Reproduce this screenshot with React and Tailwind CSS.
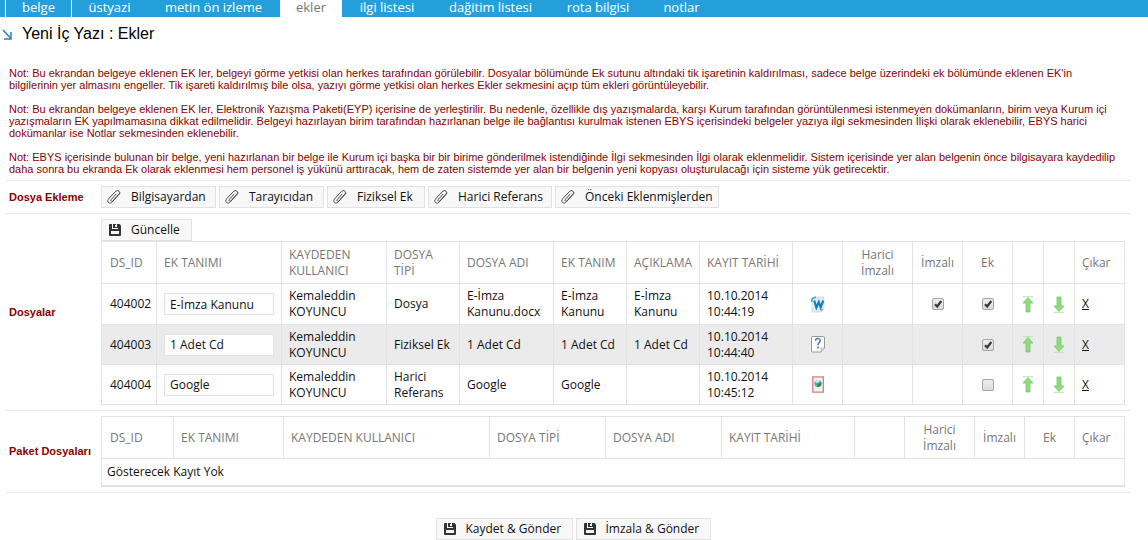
import React, { useState } from 'react';

const tabs = [
    { label: 'belge', width: 'w-[66px] border-l border-white' },
    { label: 'üstyazi', width: 'w-[76px] border-l border-white' },
    { label: 'metin ön izleme', width: 'w-[133px]' },
    { label: 'ekler', width: 'w-[62px]' },
    { label: 'ilgi listesi', width: 'w-[90px]' },
    { label: 'dağitim listesi', width: 'w-[117px]' },
    { label: 'rota bilgisi', width: 'w-[98px]' },
    { label: 'notlar', width: 'w-[69px]' },
];

const sources = [
    { label: 'Bilgisayardan', width: 'w-[115px]' },
    { label: 'Tarayıcıdan', width: 'w-[105px]' },
    { label: 'Fiziksel Ek', width: 'w-[98px]' },
    { label: 'Harici Referans', width: 'w-[124px]' },
    { label: 'Önceki Eklenmişlerden', width: 'w-[164px]' },
];

const fileColumns = [
    { label: 'DS_ID', width: 'w-[55px]' },
    { label: 'EK TANIMI', width: 'w-[125px]' },
    { label: 'KAYDEDEN KULLANICI', width: 'w-[105px]' },
    { label: 'DOSYA TİPİ', width: 'w-[73px]' },
    { label: 'DOSYA ADI', width: 'w-[94px]' },
    { label: 'EK TANIM', width: 'w-[73px]' },
    { label: 'AÇIKLAMA', width: 'w-[73px]' },
    { label: 'KAYIT TARİHİ', width: 'w-[93px]' },
    { label: '', width: 'w-[50px]' },
    { label: 'Harici İmzalı', width: 'w-[70px]', center: true },
    { label: 'İmzalı', width: 'w-[50px]', center: true },
    { label: 'Ek', width: 'w-[50px]', center: true },
    { label: '', width: 'w-[31px]' },
    { label: '', width: 'w-[31px]' },
    { label: 'Çıkar', width: 'w-[50px]' },
];

const packageColumns = [
    { label: 'DS_ID', width: 'w-[72px]' },
    { label: 'EK TANIMI', width: 'w-[110px]' },
    { label: 'KAYDEDEN KULLANICI', width: 'w-[206px]' },
    { label: 'DOSYA TİPİ', width: 'w-[116px]' },
    { label: 'DOSYA ADI', width: 'w-[116px]' },
    { label: 'KAYIT TARİHİ', width: 'w-[133px]' },
    { label: '', width: 'w-[50px]' },
    { label: 'Harici İmzalı', width: 'w-[70px]', center: true },
    { label: 'İmzalı', width: 'w-[50px]', center: true },
    { label: 'Ek', width: 'w-[50px]', center: true },
    { label: 'Çıkar', width: 'w-[50px]' },
];

const initialFiles = [
    { id: 404002, title: 'E-İmza Kanunu', type: 'Dosya', name: 'E-İmza Kanunu.docx', attachment: 'E-İmza Kanunu', note: 'E-İmza Kanunu', time: '10:44:19', icon: 'word', signed: true, attached: true },
    { id: 404003, title: '1 Adet Cd', type: 'Fiziksel Ek', name: '1 Adet Cd', attachment: '1 Adet Cd', note: '1 Adet Cd', time: '10:44:40', icon: 'unknown', attached: true },
    { id: 404004, title: 'Google', type: 'Harici Referans', name: 'Google', attachment: 'Google', note: '', time: '10:45:12', icon: 'web', attached: false },
];

const ClipIcon = () => (
    <svg width="14" height="14" viewBox="0 0 14 14" fill="none" stroke="#4a4a4a" strokeWidth="1" strokeLinecap="round">
        <path d="M9 4.200 4.400 9.400c-.6.8-.5 1.300 0 1.700.5.4 1.200.2 1.700-.4l5.700-6.400c.9-1.100.9-2.500 0-3.200-1-.8-2.500-.5-3.400.5L1.800 8.600c-1.300 1.500-1.300 3.100-.3 4 1.100.9 2.700.6 3.900-.8L13.200 3" />
    </svg>
);

const SaveIcon = () => (
    <svg width="12" height="12" viewBox="0 0 12 12" className="ml-0.5">
        <path fill="#333" d="M1 0h9.500L12 1.500V11a1 1 0 0 1-1 1H1a1 1 0 0 1-1-1V1a1 1 0 0 1 1-1z" />
        <path fill="#f8f8f8" d="M3 0h6v5H3zM2 7h8v3H2z" />
        <path fill="#333" d="M4 0h3v1H6v2H4zM8 0h1v4H4V3h4z" />
    </svg>
);

const FileIcon = ({ kind }) => {
    if (kind === 'word') {
        return (
            <svg width="14" height="17" viewBox="0 0 14 17" className="mx-auto">
                <path d="M3 1h10v12l-3 3H1V4z" fill="#e6e9f0" stroke="#cdd1d9" strokeWidth=".7" />
                <path d="M13 13l-3 3v-3z" fill="#aab0bc" />
                <path d="M.5 6C.5 3 2.500 1.500 5 1.300" fill="none" stroke="#3aa6d8" strokeWidth="1.600" />
                <path d="M3.200 4.500 5.400 11.500 7.800 6 9.600 11.500 12.300 4.500" fill="none" stroke="#147fb8" strokeWidth="2.200" />
            </svg>
        );
    }
    if (kind === 'unknown') {
        return (
            <svg width="14" height="17" viewBox="0 0 14 17" className="mx-auto">
                <path d="M1.500.5h11a1 1 0 0 1 1 1V12l-3.500 4H1.500a1 1 0 0 1-1-1V1.500a1 1 0 0 1 1-1z" fill="#fff" stroke="#999" />
                <path d="M10 16v-4h3.500" fill="#ddd" stroke="#aaa" strokeWidth=".7" />
                <path d="M4.500 4.800c.2-3 5-2.800 4.800 0C9.200 6.500 7 6.800 7 9.200" fill="none" stroke="#3b78c4" strokeWidth="1.500" />
                <circle cx="7" cy="11.500" r="1" fill="#3b78c4" />
            </svg>
        );
    }
    return (
        <svg width="14" height="17" viewBox="0 0 14 17" className="mx-auto">
            <path d="M1.800.8h10.500v15.400H1.800z" fill="#f5f1ee" stroke="#c98478" strokeWidth="1.300" />
            <circle cx="7" cy="7.500" r="3.600" fill="#5fa7b5" />
            <path d="M4 6c1-2 4-2.500 5-1.500L6.500 7z" fill="#d5ecf2" />
            <path d="M6.500 8l4-1.500c0 2.500-1.500 4.500-4 4.500z" fill="#27864a" />
        </svg>
    );
};

const MoveIcon = ({ down }) => (
    <svg width="12" height="17" viewBox="0 0 12 17" className={down ? 'rotate-180' : ''}>
        <path d="M1 .7h10" stroke="#b9e3b9" strokeWidth="1" />
        <path d="M6 1.500 11 7H8v9H4V7H1z" fill="#92dc78" stroke="#6fc67a" strokeWidth=".8" />
    </svg>
);

const ToolButton = ({ icon, children, className = '' }) => (
    <button type="button" className={`flex h-[22px] items-center border border-[#e2e2e2] bg-[#f8f8f8] pl-[5px] text-xs whitespace-nowrap text-[#111] ${className}`}>
        <span className="flex w-6 shrink-0">{icon}</span>
        {children}
    </button>
);

const CheckBox = ({ label, checked, onChange }) => (
    <span className="mx-auto grid size-3">
        <input
            type="checkbox"
            aria-label={label}
            checked={checked}
            onChange={onChange}
            className="col-start-1 row-start-1 size-3 appearance-none rounded-xs border border-[#a5a5a5] bg-linear-to-b from-[#ededed] to-[#dcdcdc]"
        />
        {checked && (
            <svg viewBox="0 0 12 12" className="pointer-events-none col-start-1 row-start-1 size-3">
                <path d="M3 6.200 5.200 8.500 9.300 3" fill="none" stroke="#3a3a3a" strokeWidth="2.200" />
            </svg>
        )}
    </span>
);

const TableHead = ({ columns }) => (
    <>
        <colgroup>
            {columns.map((col, i) => <col key={i} className={col.width} />)}
        </colgroup>
        <thead>
            <tr className="h-[42px]">
                {columns.map((col, i) => (
                    <th key={i} className={`border border-[#e2e2e2] px-[7px] font-normal text-[#777] first:pl-2 ${col.center ? 'text-center' : 'text-left'}`}>
                        {col.label}
                    </th>
                ))}
            </tr>
        </thead>
    </>
);

const FormRow = ({ label, children }) => (
    <div className="flex items-center border-b border-[#ececec] py-[5px]">
        <div className="w-24 shrink-0 pl-1 font-[Liberation_Sans,Arial,sans-serif] text-[11px] leading-3 font-bold whitespace-nowrap text-[#8b0000]">{label}</div>
        <div className="min-w-0 flex-1 pr-[5px]">{children}</div>
    </div>
);

const App = () => {
    const [files, setFiles] = useState(initialFiles);

    const update = (id, patch) => {
        setFiles(files.map(f => (f.id === id ? { ...f, ...patch } : f)));
    };

    const move = (index, step) => {
        const target = index + step;
        if (target < 0 || target >= files.length) return;
        const next = [...files];
        [next[index], next[target]] = [next[target], next[index]];
        setFiles(next);
    };

    return (
        <div className="bg-white font-[Open_Sans,sans-serif] text-xs leading-4 text-[#111]">
            {/* Tabs */}
            <nav className="flex h-[17px] bg-[#259fdc] pl-[5px] text-[13px] leading-[14px]">
                {tabs.map(tab => (
                    <a
                        key={tab.label}
                        href="#"
                        className={`shrink-0 text-center whitespace-nowrap ${tab.width} ${tab.label === 'ekler' ? 'bg-white text-[#777]' : 'text-white'}`}
                    >
                        {tab.label}
                    </a>
                ))}
            </nav>

            <header className="flex h-[34px] items-center gap-[10px] pl-[2px]">
                <svg width="10" height="11" viewBox="0 0 10 11" fill="none" stroke="#2b84ad" strokeWidth="1.500">
                    <path d="M1 1l7.500 8M9 3v7H2" />
                </svg>
                <h1 className="font-[Liberation_Sans,Arial,sans-serif] text-base leading-5 text-black">Yeni İç Yazı : Ekler</h1>
            </header>

            <main className="mr-[18px] ml-[5px]">
                {/* Notes */}
                <div className="flex flex-col gap-3 border-b border-[#ececec] pt-4 pr-2 pb-[5px] pl-1 font-[Liberation_Sans,Arial,sans-serif] text-[11px] leading-3 text-[#8b0000]">
                    <p>
                        Not: Bu ekrandan belgeye eklenen EK ler, belgeyi görme yetkisi olan herkes tarafından görülebilir. Dosyalar bölümünde Ek sutunu altındaki tik işaretinin kaldırılması, sadece belge üzerindeki ek bölümünde eklenen EK'in bilgilerinin yer almasını engeller. Tik işareti kaldırılmış bile olsa, yazıyı görme yetkisi olan herkes Ekler sekmesini açıp tüm ekleri görüntüleyebilir.
                    </p>
                    <p>
                        Not: Bu ekrandan belgeye eklenen EK ler, Elektronik Yazışma Paketi(EYP) içerisine de yerleştirilir. Bu nedenle, özellikle dış yazışmalarda, karşı Kurum tarafından görüntülenmesi istenmeyen dokümanların, birim veya Kurum içi yazışmaların EK yapılmamasına dikkat edilmelidir. Belgeyi hazırlayan birim tarafından hazırlanan belge ile bağlantısı kurulmak istenen EBYS içerisindeki belgeler yazıya ilgi sekmesinden İlişki olarak eklenebilir, EBYS harici dokümanlar ise Notlar sekmesinden eklenebilir.
                    </p>
                    <p>
                        Not: EBYS içerisinde bulunan bir belge, yeni hazırlanan bir belge ile Kurum içi başka bir bir birime gönderilmek istendiğinde İlgi sekmesinden İlgi olarak eklenmelidir. Sistem içerisinde yer alan belgenin önce bilgisayara kaydedilip daha sonra bu ekranda Ek olarak eklenmesi hem personel iş yükünü arttıracak, hem de zaten sistemde yer alan bir belgenin yeni kopyası oluşturulacağı için sisteme yük getirecektir.
                    </p>
                </div>

                <FormRow label="Dosya Ekleme">
                    <div className="flex gap-[3px]">
                        {sources.map(source => (
                            <ToolButton key={source.label} icon={<ClipIcon />} className={source.width}>{source.label}</ToolButton>
                        ))}
                    </div>
                </FormRow>

                {/* Attached files */}
                <FormRow label="Dosyalar">
                    <ToolButton icon={<SaveIcon />} className="w-[91px]">Güncelle</ToolButton>
                    <table className="w-full table-fixed border-collapse">
                        <TableHead columns={fileColumns} />
                        <tbody>
                            {files.map((file, i) => (
                                <tr key={file.id} className="h-10 first:h-[41px] even:bg-[#ebebeb] [&>td]:border-x [&>td]:border-b [&>td]:border-[#e2e2e2]">
                                    <td className="pl-2">{file.id}</td>
                                    <td className="px-[7px]">
                                        <input
                                            aria-label={`Ek tanımı ${file.id}`}
                                            value={file.title}
                                            onChange={e => update(file.id, { title: e.target.value })}
                                            className="block h-[22px] w-full border border-[#e2e2e2] bg-white px-[5px]"
                                        />
                                    </td>
                                    <td className="pl-[7px]">Kemaleddin KOYUNCU</td>
                                    <td className="pl-[7px]">{file.type}</td>
                                    <td className="pl-[7px]">{file.name}</td>
                                    <td className="pl-[7px]">{file.attachment}</td>
                                    <td className="pl-[7px]">{file.note}</td>
                                    <td className="pl-[7px]">10.10.2014 {file.time}</td>
                                    <td><FileIcon kind={file.icon} /></td>
                                    <td />
                                    <td>
                                        {file.signed !== undefined && (
                                            <CheckBox label={`İmzalı ${file.id}`} checked={file.signed} onChange={() => update(file.id, { signed: !file.signed })} />
                                        )}
                                    </td>
                                    <td>
                                        <CheckBox label={`Ek ${file.id}`} checked={file.attached} onChange={() => update(file.id, { attached: !file.attached })} />
                                    </td>
                                    <td>
                                        <button type="button" aria-label="Yukarı taşı" className="mx-auto block" onClick={() => move(i, -1)}><MoveIcon /></button>
                                    </td>
                                    <td>
                                        <button type="button" aria-label="Aşağı taşı" className="mx-auto block" onClick={() => move(i, 1)}><MoveIcon down /></button>
                                    </td>
                                    <td className="pl-[7px]"><a href="#" className="underline">X</a></td>
                                </tr>
                            ))}
                        </tbody>
                    </table>
                </FormRow>

                {/* Package files */}
                <FormRow label="Paket Dosyaları">
                    <table className="w-full table-fixed border-collapse">
                        <TableHead columns={packageColumns} />
                        <tbody>
                            <tr className="h-[27px]">
                                <td colSpan={packageColumns.length} className="border border-b-2 border-[#e2e2e2] pl-[5px]">Gösterecek Kayıt Yok</td>
                            </tr>
                        </tbody>
                    </table>
                </FormRow>
            </main>

            <footer className="flex justify-center gap-[3px] pt-[25px] pr-0.5">
                <ToolButton icon={<SaveIcon />} className="w-[137px]">Kaydet &amp; Gönder</ToolButton>
                <ToolButton icon={<SaveIcon />} className="w-[135px]">İmzala &amp; Gönder</ToolButton>
            </footer>
        </div>
    );
};

export default App;
